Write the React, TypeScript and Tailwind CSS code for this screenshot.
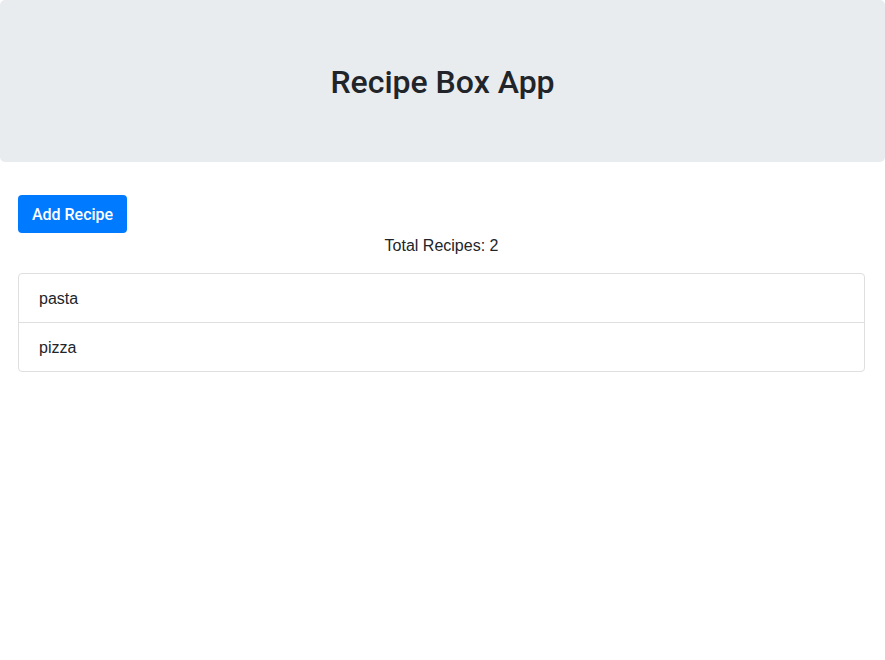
export default function App() {
  const recipes = ['pasta', 'pizza'];

  return (
    <div className="min-h-screen bg-white text-[#212529] font-['Liberation_Sans',Arial,sans-serif]">
      {/* Header */}
      <div className="bg-[#e9ecef] rounded-[5px] pt-[63px] pb-[61px] text-center">
        <h2 className="font-['Roboto',sans-serif] text-[32px] leading-[38px] font-medium">Recipe Box App</h2>
      </div>

      <div className="mt-[33px] ml-[18px] mr-[20px]">
        <button className="h-[38px] w-[109px] rounded-[4px] bg-[#007bff] pt-px font-['Roboto',sans-serif] font-medium text-white text-base leading-6">
          Add Recipe
        </button>
        <p className="pt-px text-center text-base leading-6">Total Recipes: {recipes.length}</p>

        {/* Recipe list */}
        <ul className="mt-[15px] border border-[#dfdfdf] rounded-[4px]">
          {recipes.map((r, i) => (
            <li
              key={r}
              className={`px-5 pt-[13px] pb-[11px] text-base leading-6 ${i > 0 ? 'border-t border-[#dfdfdf]' : ''}`}
            >
              {r}
            </li>
          ))}
        </ul>
      </div>
    </div>
  );
}
